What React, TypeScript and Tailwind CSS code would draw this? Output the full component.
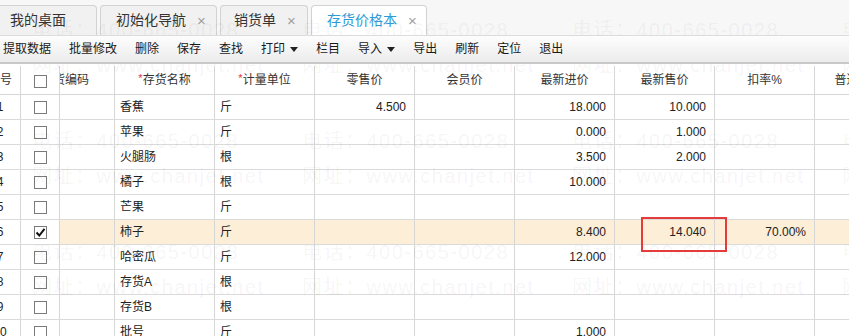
import { Fragment } from 'react';

const tabs = [
  { label: '我的桌面', w: 'w-[97px]', pl: 'pl-[10px]', close: false, active: false },
  { label: '初始化导航', w: 'w-[117px]', pl: 'pl-[15px]', close: true, active: false },
  { label: '销货单', w: 'w-[88px]', pl: 'pl-[13px]', close: true, active: false },
  { label: '存货价格本', w: 'w-[116px]', pl: 'pl-[15px]', close: true, active: true },
];

const tools = [
  { label: '提取数据' },
  { label: '批量修改' },
  { label: '删除' },
  { label: '保存' },
  { label: '查找' },
  { label: '打印', menu: true },
  { label: '栏目' },
  { label: '导入', menu: true },
  { label: '导出' },
  { label: '刷新' },
  { label: '定位' },
  { label: '退出' },
];

const rows = [
  { no: 1, name: '香蕉', unit: '斤', retail: '4.500', cost: '18.000', sale: '10.000', rate: '' },
  { no: 2, name: '苹果', unit: '斤', retail: '', cost: '0.000', sale: '1.000', rate: '' },
  { no: 3, name: '火腿肠', unit: '根', retail: '', cost: '3.500', sale: '2.000', rate: '' },
  { no: 4, name: '橘子', unit: '根', retail: '', cost: '10.000', sale: '', rate: '' },
  { no: 5, name: '芒果', unit: '斤', retail: '', cost: '', sale: '', rate: '' },
  { no: 6, name: '柿子', unit: '斤', retail: '', cost: '8.400', sale: '14.040', rate: '70.00%', checked: true },
  { no: 7, name: '哈密瓜', unit: '斤', retail: '', cost: '12.000', sale: '', rate: '' },
  { no: 8, name: '存货A', unit: '根', retail: '', cost: '', sale: '', rate: '' },
  { no: 9, name: '存货B', unit: '根', retail: '', cost: '', sale: '', rate: '' },
  { no: 10, name: '批号', unit: '斤', retail: '', cost: '1.000', sale: '', rate: '' },
];

const priceHeads = ['零售价', '会员价', '最新进价', '最新售价', '扣率%', '普通批发价'];

function Checkbox({ checked }: { checked?: boolean }) {
  return (
    <div className="w-[13px] h-[13px] border border-[#7a7a7a] bg-white flex items-center justify-center">
      {checked && (
        <svg width="11" height="11" viewBox="0 0 11 11">
          <path d="M1.5 5.5 L4.3 8.5 L9.5 1.8" fill="none" stroke="#111" strokeWidth="2" />
        </svg>
      )}
    </div>
  );
}

function Caret() {
  return (
    <svg width="8" height="5" viewBox="0 0 8 5" className="ml-[5px] mt-[1px]">
      <path d="M0 0 H8 L4 5 Z" fill="#222" />
    </svg>
  );
}

function Watermark() {
  const marks = [];
  for (let j = 0; j < 3; j++) {
    for (let k = 0; k < 4; k++) {
      marks.push({ x: 32 + 270 * k, y: 18 + 111 * j });
    }
  }
  return (
    <div className="absolute inset-0 z-0 pointer-events-none select-none text-black/[0.055] text-[20px] leading-[24px] tracking-[1.5px] font-['Liberation_Sans','Noto_Sans_CJK_SC',sans-serif] whitespace-nowrap">
      {marks.map((m, i) => (
        <Fragment key={i}>
          <span className="absolute" style={{ left: m.x, top: m.y }}>电话：400-665-0028</span>
          <span className="absolute" style={{ left: m.x, top: m.y + 35 }}>网址：www.chanjet.net</span>
        </Fragment>
      ))}
    </div>
  );
}

export default function App() {
  return (
    <div className="relative w-[849px] h-[336px] overflow-hidden bg-white text-[12px] text-[#222] font-['Liberation_Sans','Noto_Sans_CJK_SC',sans-serif]">
      <Watermark />

      {/* tabs */}
      <div className="h-[35px] bg-[#f7f7f7] flex items-end gap-[3px]">
        {tabs.map((t, i) => (
          <div
            key={i}
            className={`${t.w} ${t.pl} h-[30px] shrink-0 flex items-center gap-[11px] rounded-t-[4px] border border-b-0 border-[#d2d2d2] text-[14px] ${
              t.active ? 'bg-white text-[#2e9ad6]' : 'bg-[#f1f1f1] text-[#333]'
            } ${i === 0 ? 'border-l-0 rounded-tl-none' : ''}`}
          >
            <span>{t.label}</span>
            {t.close && <span className="text-[#a0a0a0] text-[15px] leading-none">×</span>}
          </div>
        ))}
      </div>

      {/* toolbar */}
      <div className="relative z-10 h-[29px] flex items-center gap-[18px] pl-[3px] border-t border-[#dcdcdc] border-b-[2px] border-b-[#c9c9c9] bg-gradient-to-b from-[#fdfdfd] to-[#ececec] text-[12px] text-[#1a1a1a]">
        {tools.map((t, i) => (
          <div key={i} className="flex items-center">
            <span>{t.label}</span>
            {t.menu && <Caret />}
          </div>
        ))}
      </div>

      {/* grid */}
      <div className="w-[1100px]">
        <div className="flex h-[31px] border-b border-[#d6d6d6] items-center text-[#333] pt-[2px]">
          <div className="w-[21px] h-full shrink-0 overflow-hidden border-r border-[#d6d6d6] flex items-center">
            <div className="w-[40px] -ml-[20px] shrink-0 text-center">序号</div>
          </div>
          <div className="w-[39px] h-full shrink-0 border-r border-[#d6d6d6] flex items-center justify-center pt-[3px]">
            <Checkbox />
          </div>
          <div className="w-[55px] h-full shrink-0 overflow-hidden border-r border-[#d6d6d6] flex items-center">
            <div className="w-[100px] -ml-[45px] shrink-0 text-center">存货编码</div>
          </div>
          <div className="w-[100px] h-full shrink-0 border-r border-[#d6d6d6] flex items-center justify-center">
            <span className="text-[#e0303a] text-[11px] -mt-[4px]">*</span>存货名称
          </div>
          <div className="w-[100px] h-full shrink-0 border-r border-[#d6d6d6] flex items-center justify-center">
            <span className="text-[#e0303a] text-[11px] -mt-[4px]">*</span>计量单位
          </div>
          {priceHeads.map((h, i) => (
            <div key={i} className="w-[100px] h-full shrink-0 border-r border-[#d6d6d6] flex items-center justify-center">
              {h}
            </div>
          ))}
        </div>

        {rows.map((r) => {
          const hl = r.checked ? 'bg-[#fdeed8]' : '';
          return (
            <div key={r.no} className={`flex h-[25px] border-b border-[#dadada] items-center ${r.checked ? 'relative z-10' : ''}`}>
              <div className={`w-[21px] h-full shrink-0 overflow-hidden border-r border-[#d6d6d6] flex items-center ${r.checked ? 'bg-white' : ''}`}>
                <div className="w-[40px] -ml-[20px] shrink-0 text-center">{r.no}</div>
              </div>
              <div className={`w-[39px] h-full shrink-0 border-r border-[#d6d6d6] flex items-center justify-center ${r.checked ? 'bg-white' : ''}`}>
                <Checkbox checked={r.checked} />
              </div>
              <div className={`w-[55px] h-full shrink-0 border-r border-[#d6d6d6] ${hl}`} />
              <div className={`w-[100px] h-full shrink-0 border-r border-[#d6d6d6] flex items-center pl-[5px] ${hl}`}>{r.name}</div>
              <div className={`w-[100px] h-full shrink-0 border-r border-[#d6d6d6] flex items-center pl-[5px] ${hl}`}>{r.unit}</div>
              <div className={`w-[100px] h-full shrink-0 border-r border-[#d6d6d6] flex items-center justify-end pr-[8px] ${hl}`}>{r.retail}</div>
              <div className={`w-[100px] h-full shrink-0 border-r border-[#d6d6d6] ${hl}`} />
              <div className={`w-[100px] h-full shrink-0 border-r border-[#d6d6d6] flex items-center justify-end pr-[8px] ${hl}`}>{r.cost}</div>
              <div className={`w-[100px] h-full shrink-0 border-r border-[#d6d6d6] flex items-center justify-end pr-[8px] ${hl}`}>{r.sale}</div>
              <div className={`w-[100px] h-full shrink-0 border-r border-[#d6d6d6] flex items-center justify-end pr-[8px] ${hl}`}>{r.rate}</div>
              <div className={`w-[100px] h-full shrink-0 border-r border-[#d6d6d6] ${hl}`} />
            </div>
          );
        })}
      </div>

      {/* annotation box */}
      <div className="absolute z-20 left-[641px] top-[217px] w-[86px] h-[35px] border-2 border-[#e63b3b]" />
    </div>
  );
}
